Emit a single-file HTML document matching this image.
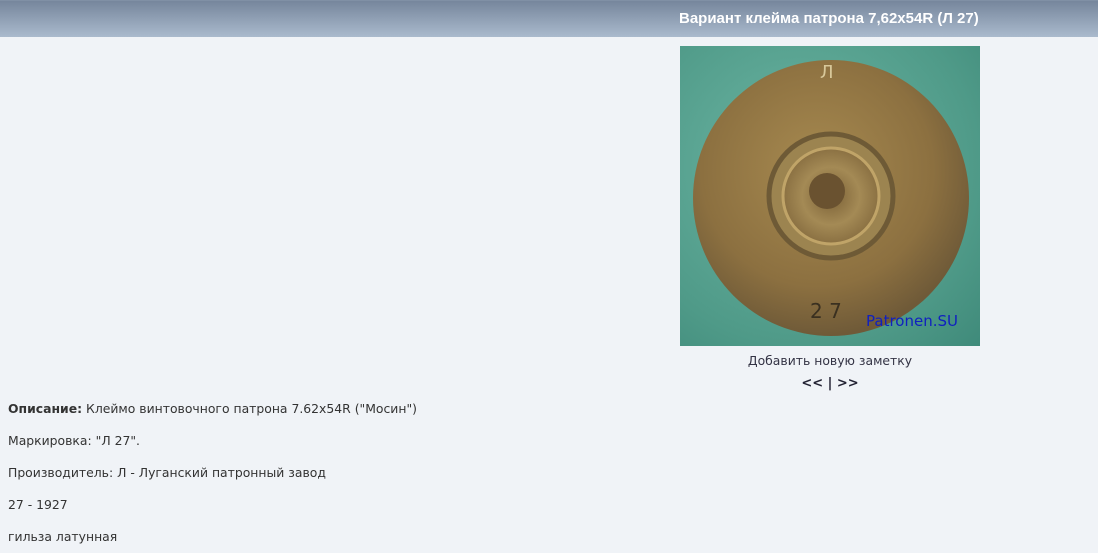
<!DOCTYPE html>
<html><head><meta charset="utf-8"><style>
body{margin:0;width:1098px;height:553px;background:#f0f3f7;font-family:"DejaVu Sans","Liberation Sans",sans-serif;overflow:hidden;position:relative;color:#333}
.hdr{position:absolute;left:0;top:0;width:1098px;height:37px;background:linear-gradient(#76869c,#aabacd);border-top:1px solid #8090a5;box-sizing:border-box}
.hdr span{position:absolute;left:679px;top:9px;font:bold 15px "Liberation Sans",sans-serif;color:#fff}
.img{position:absolute;left:680px;top:46px;width:300px;height:300px;background:radial-gradient(circle at 40% 40%,#6cb5a3,#4f9a88 70%,#3f8a7a);overflow:hidden}
.t{position:absolute;font-size:12.4px;left:8px}
</style></head><body>
<div class="hdr"><span>Вариант клейма патрона 7,62x54R (Л 27)</span></div>
<div class="img"><svg width="300" height="300">
<defs><radialGradient id="g" cx="45%" cy="40%" r="60%"><stop offset="0" stop-color="#a78a50"/><stop offset=".7" stop-color="#8c7040"/><stop offset="1" stop-color="#6f5a38"/></radialGradient>
<radialGradient id="p" cx="50%" cy="50%" r="50%"><stop offset="0" stop-color="#7a6036"/><stop offset=".6" stop-color="#a48a55"/><stop offset="1" stop-color="#8a7042"/></radialGradient></defs>
<circle cx="151" cy="152" r="138" fill="url(#g)"/>
<circle cx="151" cy="150" r="62" fill="#9c8450" stroke="#6e5a36" stroke-width="5"/>
<circle cx="151" cy="150" r="48" fill="url(#p)" stroke="#c0a468" stroke-width="3"/>
<circle cx="147" cy="145" r="18" fill="#6a5230"/>
<text x="140" y="32" font-size="18" fill="#d8c89a" font-family="DejaVu Sans">Л</text>
<text x="130" y="272" font-size="20" fill="#3a3020" font-family="DejaVu Sans">2 7</text>
<text x="186" y="280" font-size="15" fill="#1020c0" font-family="DejaVu Sans">Patronen.SU</text>
</svg></div>
<div style="position:absolute;left:680px;width:300px;top:353px;text-align:center;font-size:12.4px;color:#334">Добавить новую заметку</div>
<div style="position:absolute;left:680px;width:300px;top:376px;text-align:center;font-size:13px;font-weight:bold;color:#223">&lt;&lt; | &gt;&gt;</div>
<div class="t" style="top:401px"><b>Описание:</b> Клеймо винтовочного патрона 7.62x54R ("Мосин")</div>
<div class="t" style="top:433px">Маркировка: "Л 27".</div>
<div class="t" style="top:465px">Производитель: Л - Луганский патронный завод</div>
<div class="t" style="top:497px">27 - 1927</div>
<div class="t" style="top:529px">гильза латунная</div>
</body></html>
